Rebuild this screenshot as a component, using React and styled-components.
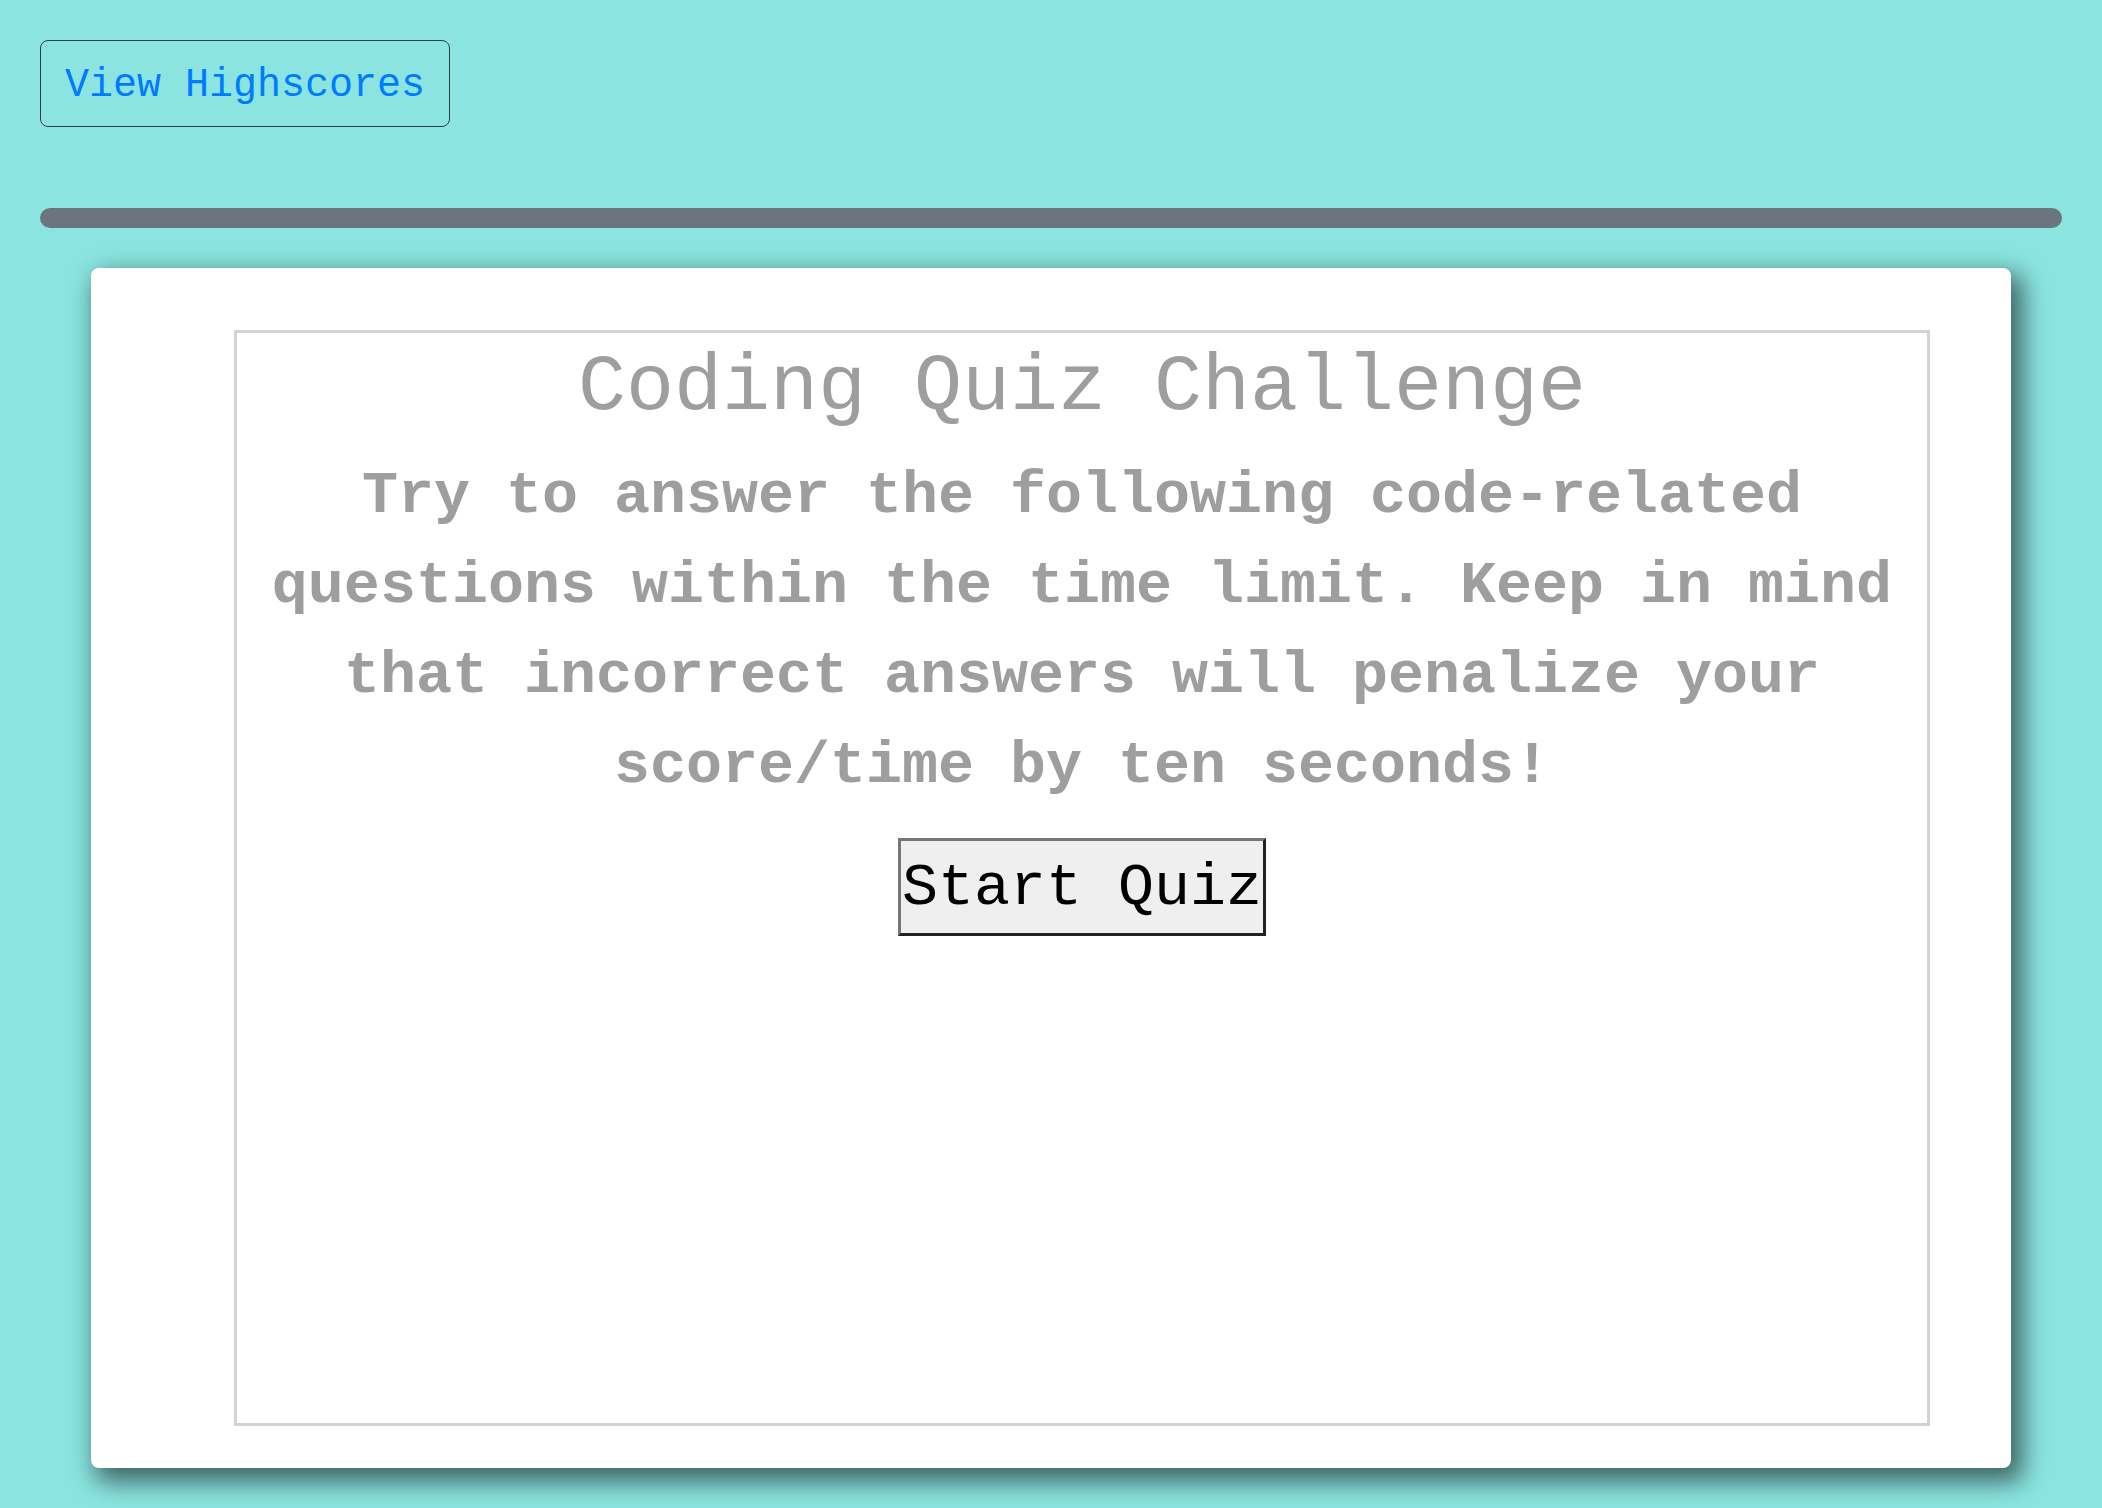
import styled, { createGlobalStyle } from "styled-components"

const GlobalStyle = createGlobalStyle`
    body {
        margin: 0;
        background-color: #8be4e0;
        font-family: "Liberation Mono", "Courier New", monospace;
        font-size: 40px;
        line-height: 1.5;
    }
`

const Page = styled.div`
    display: flex;
    flex-direction: column;
    padding: 40px;
    min-height: 100vh;
    box-sizing: border-box;
`

const Header = styled.header`
    display: flex;
    align-items: flex-start;
`

const ScoresButton = styled.button`
    font-family: inherit;
    font-size: 40px;
    line-height: 1.5;
    color: #007bff;
    background: transparent;
    border: 1px solid #343a40;
    border-radius: 8px;
    padding: 15px 24px 10px;
    cursor: pointer;
`

const Progress = styled.div`
    margin-top: 81px;
    height: 20px;
    border-radius: 10px;
    background-color: #6c757d;
`

const Card = styled.main`
    width: 1920px;
    height: 1200px;
    margin: 40px auto 0;
    box-sizing: border-box;
    padding: 62px 81px 42px 143px;
    background: #fff;
    border-radius: 8px;
    box-shadow: 8px 10px 24px 4px rgba(0, 0, 0, 0.55);
`

const Frame = styled.section`
    height: 100%;
    box-sizing: border-box;
    border: 3px solid #d3d3d3;
    padding: 7px 16px 0;
    display: flex;
    flex-direction: column;
    align-items: center;
    text-align: center;
    color: #9e9e9e;
`

const Title = styled.h1`
    margin: 0;
    font-size: 80px;
    font-weight: 400;
    line-height: 1.2;
`

const Intro = styled.p`
    margin: 15px 0 0;
    font-size: 60px;
    font-weight: 700;
    line-height: 1.5;
`

const StartButton = styled.button`
    margin-top: 27px;
    font-family: inherit;
    font-size: 60px;
    line-height: 1.5;
    color: #000;
    background: #efefef;
    border-width: 3px;
    border-style: solid;
    border-color: #767676 #222 #222 #767676;
    padding: 2px 1px 0;
    cursor: pointer;
`

export default function App() {
    return (
        <>
            <GlobalStyle />
            <Page>
                <Header>
                    <ScoresButton>View Highscores</ScoresButton>
                </Header>
                <Progress />
                <Card>
                    <Frame>
                        <Title>Coding Quiz Challenge</Title>
                        <Intro>
                            Try to answer the following code-related questions within the time limit. Keep in mind that incorrect answers will penalize your score/time by ten seconds!
                        </Intro>
                        <StartButton>Start Quiz</StartButton>
                    </Frame>
                </Card>
            </Page>
        </>
    )
}
